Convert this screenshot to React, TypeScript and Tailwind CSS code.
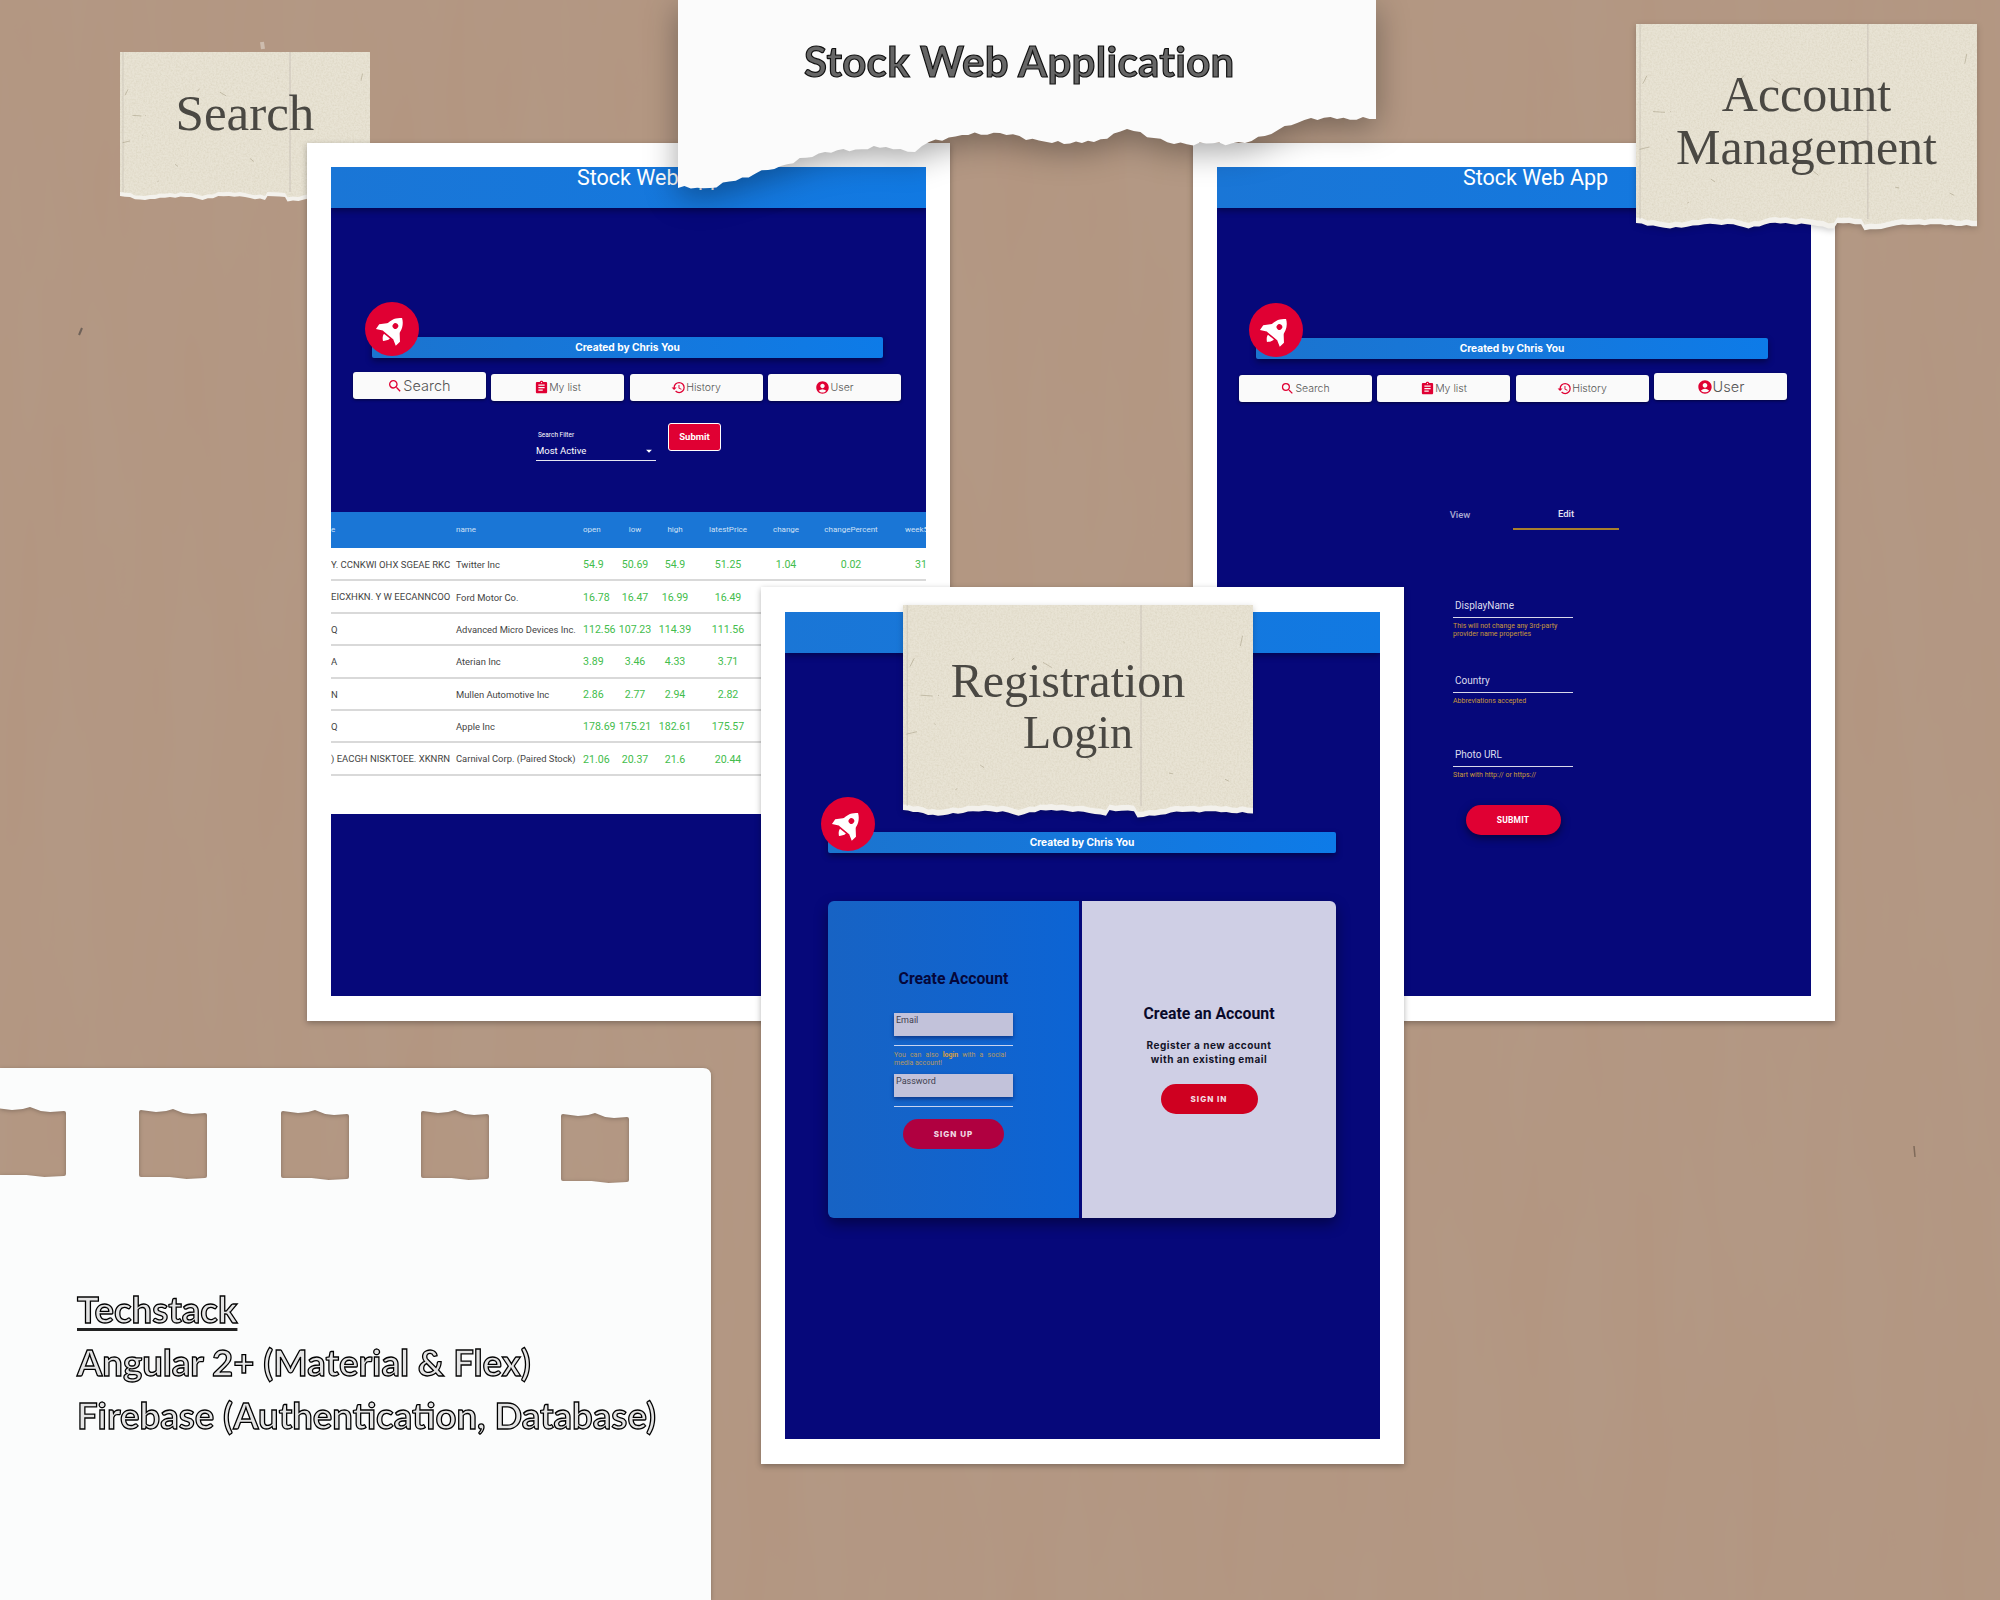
import type { ReactNode } from 'react';
import { MdAccountCircle, MdArrowDropDown, MdAssignment, MdHistory, MdSearch } from 'react-icons/md';

type Point = [number, number];

const tearProfile: Point[] = [
  [0, 0], [0.1, 5.6], [0.2, 1.3], [0.285, 1.3], [0.33, 5.6], [0.393, 0], [0.5, 1.3], [0.58, 5.6],
  [0.59, 0], [0.66, 1.3], [0.67, 7.3], [0.736, 4.6], [0.765, 2.3], [0.863, 1.3], [1, 3.3],
];

const specks: [number, number, number, number][] = [
  [0.97, 0.15, -0.006, 0.05], [0.31, 0.27, 0.008, -0.012], [0.63, 0.18, 0.003, 0.004], [0.4, 0.28, 0.025, 0.025],
  [0.02, 0.3, 0.012, -0.04], [0.05, 0.44, 0.035, 0.004], [0.1, 0.44, 0.003, 0.002], [0.09, 0.58, 0.003, 0.003],
  [0.01, 0.63, 0.03, -0.012], [0.22, 0.78, 0.012, 0.014], [0.15, 0.9, 0.005, -0.004], [0.92, 0.85, 0.012, 0.01],
  [0.52, 0.74, 0.015, 0.02], [0.76, 0.82, 0.012, 0.004],
];

// breaks a straight edge up so it looks ripped rather than drawn
function roughen(points: Point[], step = 7, amount = 1) {
  const out: Point[] = [];
  let n = 0;
  points.forEach((p, i) => {
    const next = points[i + 1];
    out.push(p);
    if (!next) return;
    const count = Math.floor(Math.abs(next[0] - p[0]) / step);
    for (let k = 1; k < count; k++) {
      n++;
      const t = k / count;
      const wobble = (Math.sin(n * 2.3) * 0.8 + Math.sin(n * 5.1) * 0.5) * amount;
      out.push([p[0] + (next[0] - p[0]) * t, p[1] + (next[1] - p[1]) * t + wobble]);
    }
  });
  return out.map(([x, y]) => `L${x.toFixed(1)} ${y.toFixed(1)}`).join(' ');
}

function TornPaper({ className, width, base, children }: { className: string; width: number; base: number; children?: ReactNode }) {
  const scale = width / 341;
  const edge = tearProfile.map(([t, dy]) => [width * t, base + dy * scale] as Point).reverse();
  const inner = tearProfile.map(([t, dy]) => [width * t, base + (dy - 5.5) * scale] as Point).reverse();
  const height = base + 12;
  return (
    <div className={`absolute ${className}`}>
      <svg width={width} height={height} viewBox={`0 0 ${width} ${height}`} className="absolute left-0 top-0 block">
        <path d={`M0 0 H${width} ${roughen(edge, 5, 0.7)} Z`} fill="#f3f1ec" />
        <path d={`M0 0 H${width} ${roughen(inner, 5, 0.9)} Z`} fill="#e8e3d4" filter="url(#paperGrain)" />
        <line x1={width * 0.012} y1="0" x2={width * 0.012} y2={base - 4} stroke="#b9b2a8" strokeWidth="1" opacity="0.5" />
        <line x1={width * 0.68} y1="0" x2={width * 0.68} y2={base - 4} stroke="#b9b0aa" strokeWidth="1" opacity="0.6" />
        {specks.map(([x, y, dx, dy], i) => (
          <line key={i} x1={x * width} y1={y * base} x2={(x + dx) * width} y2={(y + dy) * base} stroke="#8d8468" strokeWidth="1" opacity="0.4" />
        ))}
      </svg>
      <div className="relative flex flex-col items-center font-['Liberation_Serif',serif] text-[#4a4843]">{children}</div>
    </div>
  );
}

function TitlePaper() {
  const edge: Point[] = [
    [698, 119], [633, 118], [600, 130], [567, 143], [496, 144], [449, 129], [416, 142], [374, 143],
    [322, 133], [284, 135], [251, 142], [237, 152], [208, 147], [147, 152], [90, 170], [32, 188], [0, 188],
  ];
  return (
    <div className="absolute left-[678px] top-0 h-[196px] w-[698px] drop-shadow-[0_8px_16px_rgba(0,0,0,0.35)]">
      <svg width="698" height="196" viewBox="0 0 698 196" className="absolute left-0 top-0 block">
        <path d={`M0 0 H698 ${roughen(edge, 6, 1.6)} Z`} fill="#fbfbfb" />
      </svg>
      <h1 className="relative pt-[36px] pl-[126px] font-['Lato',sans-serif] text-[42px] leading-[50px] font-bold tracking-[0.3px] whitespace-nowrap text-[#666] [-webkit-text-stroke:1.2px_#111]">
        Stock Web Application
      </h1>
    </div>
  );
}

function Notebook() {
  const holes = [
    [-6, 66, 40], [139, 207, 42], [281, 349, 43], [421, 489, 43], [561, 629, 46],
  ];
  const holePath = holes.map(([a, b, y]) => {
    const w = b - a;
    return `M${a + 2} ${y} L${a + w * 0.25} ${y + 2} L${a + w * 0.4} ${y + 1} L${a + w * 0.5} ${y - 1} L${a + w * 0.65} ${y + 3} L${a + w * 0.78} ${y + 4} L${b - 2} ${y + 3} Q${b} ${y + 3} ${b} ${y + 5} L${b} ${y + 66} Q${b} ${y + 68} ${b - 2} ${y + 68} L${a + w * 0.7} ${y + 69} L${a + w * 0.45} ${y + 67} L${a + 2} ${y + 67} Q${a} ${y + 67} ${a} ${y + 65} L${a} ${y + 2} Q${a} ${y} ${a + 2} ${y} Z`;
  }).join(' ');
  return (
    <div className="absolute left-0 top-[1068px] h-[532px] w-[712px] drop-shadow-[0_1px_2px_rgba(0,0,0,0.25)]">
      <svg width="712" height="532" viewBox="0 0 712 532" className="absolute left-0 top-0 block">
        <path fillRule="evenodd" d={`M-2 0 H703 Q711 0 711 8 V532 H-2 Z ${holePath}`} fill="#fbfcfc" />
      </svg>
      <div className="relative pl-[77px] pt-[215px] font-['Lato',sans-serif] text-[36.5px] font-bold text-[#e4e4e4] [-webkit-text-stroke:1.3px_#000]">
        <p className="leading-[53px] underline decoration-[3px] underline-offset-[5px] decoration-[#222]">Techstack</p>
        <p className="leading-[53px]">Angular 2+ (Material &amp; Flex)</p>
        <p className="leading-[53px]">Firebase (Authentication, Database)</p>
      </div>
    </div>
  );
}

function RocketIcon() {
  return (
    <svg viewBox="0 0 24 24" fill="white" className="h-[31px] w-[31px] rotate-[40deg]">
      <path fillRule="evenodd" d="M12 .5C16.500 3.500 18 8 18 12l-1 5.500H7L6 12C6 8 7.500 3.500 12 .5ZM12 6.300a2.200 2.200 0 1 0 0 4.400 2.200 2.200 0 1 0 0-4.400Z" />
      <path d="M6.500 10 1.500 15.500 2 20l5.500-3ZM17.500 10l5 5.500-.5 4.500-5.500-3Z" />
      <path d="M9 18.700h6c0 2-1.800 3.800-3 4.800-1.200-1-3-2.800-3-4.800Z" />
    </svg>
  );
}

function AppHeader() {
  return (
    <div className="relative h-[41px] shrink-0 bg-gradient-to-r from-[#1a76d6] to-[#1179e2] pl-[246px] text-[21.5px] leading-[22px] text-white shadow-[0_3px_6px_rgba(0,0,0,0.35)]">
      Stock Web App
    </div>
  );
}

function CreatedBar({ className }: { className: string }) {
  return (
    <div className={`relative flex h-[21px] items-center justify-center rounded-[2px] bg-gradient-to-r from-[#1b74cf] to-[#0d7be8] font-['Inter',sans-serif] text-[10.2px] font-bold text-white shadow-[0_3px_6px_rgba(0,0,0,0.4)] ${className}`}>
      Created by Chris You
      <div className="absolute left-[-7px] top-[-35px] flex h-[54px] w-[54px] items-center justify-center rounded-full bg-[#e00033]">
        <RocketIcon />
      </div>
    </div>
  );
}

const navItems = [
  { label: 'Search', icon: MdSearch },
  { label: 'My list', icon: MdAssignment },
  { label: 'History', icon: MdHistory },
  { label: 'User', icon: MdAccountCircle },
];

function NavButtons({ active }: { active: string }) {
  return (
    <div className="flex items-start gap-[5.5px] pl-[21.5px] pt-[14px]">
      {navItems.map((item) => {
        const Icon = item.icon;
        const on = item.label === active;
        return (
          <button
            key={item.label}
            className={`flex h-[27px] w-[133px] items-center justify-center rounded-[3px] bg-[#fafafa] font-['Inter',sans-serif] font-light text-[#555] shadow-[0_1px_3px_rgba(0,0,0,0.5)] ${on ? 'text-[14.5px]' : 'mt-[2px] text-[10.5px]'}`}
          >
            <Icon className={`text-[#e00033] ${on ? 'h-[16px] w-[16px]' : 'h-[15px] w-[15px]'}`} />
            {item.label}
          </button>
        );
      })}
    </div>
  );
}

function Shell({ className, children }: { className: string; children: ReactNode }) {
  return (
    <div className={`absolute bg-white px-[24px] pb-[25px] shadow-[0_2px_6px_rgba(0,0,0,0.3)] ${className}`}>
      <div className="flex h-full flex-col overflow-hidden bg-[#06087a] font-['Roboto',sans-serif]">{children}</div>
    </div>
  );
}

const stocks = [
  { symbol: 'Y. CCNKWI OHX SGEAE RKC', name: 'Twitter Inc', open: '54.9', low: '50.69', high: '54.9', latest: '51.25', change: '1.04', percent: '0.02', week: '31' },
  { symbol: 'EICXHKN. Y W EECANNCOO', name: 'Ford Motor Co.', open: '16.78', low: '16.47', high: '16.99', latest: '16.49' },
  { symbol: 'Q', name: 'Advanced Micro Devices Inc.', open: '112.56', low: '107.23', high: '114.39', latest: '111.56' },
  { symbol: 'A', name: 'Aterian Inc', open: '3.89', low: '3.46', high: '4.33', latest: '3.71' },
  { symbol: 'N', name: 'Mullen Automotive Inc', open: '2.86', low: '2.77', high: '2.94', latest: '2.82' },
  { symbol: 'Q', name: 'Apple Inc', open: '178.69', low: '175.21', high: '182.61', latest: '175.57' },
  { symbol: ') EACGH NISKTOEE. XKNRN', name: 'Carnival Corp. (Paired Stock)', open: '21.06', low: '20.37', high: '21.6', latest: '20.44' },
];

function StockTable() {
  return (
    <div className="h-[302px] shrink-0 overflow-hidden bg-white">
      <table className="w-[640px] table-fixed border-collapse text-[10.6px] whitespace-nowrap">
        <colgroup>
          <col className="w-[125px]" />
          <col className="w-[121px]" />
          <col className="w-[38px]" />
          <col className="w-[40px]" />
          <col className="w-[40px]" />
          <col className="w-[66px]" />
          <col className="w-[50px]" />
          <col className="w-[80px]" />
          <col className="w-[80px]" />
        </colgroup>
        <thead>
          <tr className="h-[36px] bg-[#1a76d6] text-[8px] text-[#cfe0f5]">
            <th className="text-left font-normal">e</th>
            <th className="text-left font-normal">name</th>
            <th className="pl-[6px] text-left font-normal">open</th>
            <th className="font-normal">low</th>
            <th className="font-normal">high</th>
            <th className="font-normal">latestPrice</th>
            <th className="font-normal">change</th>
            <th className="font-normal">changePercent</th>
            <th className="pl-[14px] text-left font-normal">week5</th>
          </tr>
        </thead>
        <tbody>
          {stocks.map((row) => (
            <tr key={row.name} className="h-[32.4px] border-b-2 border-[#d9d9d9] text-[#43bd4c]">
              <td className="pt-[2px] text-[9.5px] text-[#444]">{row.symbol}</td>
              <td className="pt-[2px] text-[9.4px] text-[#444]">{row.name}</td>
              <td className="pl-[6px] pt-[2px]">{row.open}</td>
              <td className="pt-[2px] text-center">{row.low}</td>
              <td className="pt-[2px] text-center">{row.high}</td>
              <td className="pt-[2px] text-center">{row.latest}</td>
              <td className="pt-[2px] text-center">{row.change}</td>
              <td className="pt-[2px] text-center">{row.percent}</td>
              <td className="pl-[24px] pt-[2px]">{row.week}</td>
            </tr>
          ))}
        </tbody>
      </table>
    </div>
  );
}

function SearchWindow() {
  return (
    <Shell className="left-[307px] top-[143px] h-[878px] w-[643px] pt-[24px]">
      <AppHeader />
      <div className="h-[304px] shrink-0 pt-[129px]">
        <CreatedBar className="ml-[41px] w-[511px]" />
        <NavButtons active="Search" />
        <div className="flex items-start justify-center gap-[12px] pt-[22px]">
          <div className="w-[120px] pt-[7px] text-white">
            <div className="pl-[2px] text-[6.5px] leading-[10px]">Search Filter</div>
            <div className="flex h-[21px] items-center justify-between border-b border-white/90 pt-[2px] text-[9.5px]">
              Most Active
              <MdArrowDropDown className="h-[14px] w-[14px]" />
            </div>
          </div>
          <button className="h-[28px] w-[53px] rounded-[3px] border border-white bg-[#e00033] text-[9.5px] font-bold text-white">Submit</button>
        </div>
      </div>
      <StockTable />
      <div className="flex-1 bg-[#06087a]" />
    </Shell>
  );
}

const accountFields = [
  { label: 'DisplayName', hint: 'This will not change any 3rd-party provider name properties' },
  { label: 'Country', hint: 'Abbreviations accepted' },
  { label: 'Photo URL', hint: 'Start with http:// or https://' },
];

function AccountWindow() {
  return (
    <Shell className="left-[1193px] top-[143px] h-[878px] w-[642px] pt-[24px]">
      <AppHeader />
      <div className="pt-[130px]">
        <CreatedBar className="ml-[39px] w-[512px]" />
        <NavButtons active="User" />
      </div>
      <div className="mt-[97px] flex justify-center pr-[2px] text-[9.5px] font-medium">
        <div className="flex h-[31px] w-[106px] items-center justify-center pt-[1px] text-[#a9a9d0]">View</div>
        <div className="flex h-[31px] w-[106px] items-center justify-center border-b-2 border-[#a87f2d] pt-[1px] text-[#e4e4f2]">Edit</div>
      </div>
      <div className="ml-[236px] mt-[69px] w-[120px]">
        <div>
          {accountFields.map((field) => (
            <div key={field.label} className="h-[74.5px] last:h-[57px]">
              <div className="h-[19px] border-b border-[#d8d8ea] pl-[2px] text-[10px] leading-[14px] text-[#dcdcee]">{field.label}</div>
              <p className="mt-[4px] text-[7px] leading-[8px] text-[#c8993a]">{field.hint}</p>
            </div>
          ))}
        </div>
        <button className="mx-auto block h-[30px] w-[95px] rounded-full bg-[#e00033] text-[8.5px] font-bold tracking-wide text-white shadow-[0_3px_8px_rgba(0,0,0,0.5)]">SUBMIT</button>
      </div>
    </Shell>
  );
}

function FormField({ label }: { label: string }) {
  return (
    <div className="w-[119px]">
      <div className="h-[23px] bg-[#c2c2da] pl-[2px] text-[9px] leading-[14px] text-[#3f3f4f] shadow-[0_2px_4px_rgba(0,0,60,0.45)]">{label}</div>
      <div className="mt-[9px] h-px bg-[#c8d4f0]" />
    </div>
  );
}

function RegistrationWindow() {
  return (
    <Shell className="left-[761px] top-[587px] h-[877px] w-[643px] pt-[25px]">
      <AppHeader />
      <div className="pt-[179px]">
        <CreatedBar className="ml-[43px] w-[508px]" />
      </div>
      <div className="ml-[43px] mt-[48px] flex h-[317px] w-[508px] shrink-0 gap-[3px] overflow-hidden rounded-[6px] shadow-[0_6px_14px_rgba(0,0,0,0.4)]">
        <div className="flex w-[251px] flex-col items-center bg-gradient-to-r from-[#1763c4] to-[#0c64d4] pt-[68px]">
          <h2 className="text-[15.8px] leading-[20px] font-bold text-[#05073a]">Create Account</h2>
          <div className="mt-[24px]">
            <FormField label="Email" />
            <p className="mt-[5px] w-[112px] text-justify text-[7px] leading-[8px] text-[#b59a63]">
              You can also <b className="text-[#d8a040]">login</b> with a social media account!
            </p>
            <div className="mt-[7px]">
              <FormField label="Password" />
            </div>
          </div>
          <button className="mt-[12px] h-[30px] w-[101px] rounded-full bg-[#b00040] font-['Inter',sans-serif] text-[8px] font-extrabold tracking-[1px] text-[#f0d8e2]">SIGN UP</button>
        </div>
        <div className="flex flex-1 flex-col items-center bg-[#cfcfe5] pt-[103px]">
          <h2 className="text-[15.8px] leading-[20px] font-bold text-[#0a0a2a]">Create an Account</h2>
          <p className="mt-[14px] text-center font-['Inter',sans-serif] text-[10px] leading-[14px] font-bold tracking-[0.5px] text-[#141428]">
            Register a new account
            <br />
            with an existing email
          </p>
          <button className="mt-[18px] h-[30px] w-[97px] rounded-full bg-[#cf0020] font-['Inter',sans-serif] text-[8px] font-extrabold tracking-[1px] text-[#f4dce0]">SIGN IN</button>
        </div>
      </div>
    </Shell>
  );
}

export default function App() {
  return (
    <div className="relative h-[1600px] w-[2000px] overflow-hidden bg-[#b39884]">
      <svg width="2000" height="1600" className="absolute left-0 top-0 block">
        <defs>
          <filter id="kraft" x="0" y="0" width="100%" height="100%">
            <feTurbulence type="fractalNoise" baseFrequency="0.018 0.003" numOctaves="3" seed="7" />
            <feColorMatrix values="0 0 0 0 0.45 0 0 0 0 0.29 0 0 0 0 0.2 0.7 0 0 0 -0.2" />
          </filter>
          <filter id="paperGrain" x="0" y="0" width="100%" height="100%">
            <feTurbulence type="fractalNoise" baseFrequency="0.55" numOctaves="3" seed="3" result="noise" />
            <feColorMatrix in="noise" values="0 0 0 0 0.6 0 0 0 0 0.55 0 0 0 0 0.4 0.7 0 0 0 -0.25" result="tint" />
            <feComposite in="tint" in2="SourceGraphic" operator="in" result="grain" />
            <feMerge>
              <feMergeNode in="SourceGraphic" />
              <feMergeNode in="grain" />
            </feMerge>
          </filter>
        </defs>
        <rect width="2000" height="1600" filter="url(#kraft)" />
        <line x1="82" y1="328" x2="79" y2="335" stroke="#6f6259" strokeWidth="2" />
        <line x1="262" y1="42" x2="263" y2="49" stroke="#cdbcae" strokeWidth="4" />
        <line x1="1914" y1="1146" x2="1915" y2="1157" stroke="#7f6a5a" strokeWidth="1.5" />
      </svg>

      <Notebook />

      <TornPaper className="left-[120px] top-[52px] w-[250px]" width={250} base={144}>
        <div className="pt-[31px] text-[51px] leading-[60px]">Search</div>
      </TornPaper>

      <SearchWindow />
      <AccountWindow />
      <TitlePaper />
      <RegistrationWindow />

      <TornPaper className="left-[1636px] top-[24px] w-[341px] drop-shadow-[0_2px_3px_rgba(0,0,0,0.2)]" width={341} base={199}>
        <div className="pt-[44px] text-[50px] leading-[53px]">Account</div>
        <div className="text-[50px] leading-[53px]">Management</div>
      </TornPaper>

      <TornPaper className="left-[903px] top-[605px] w-[350px] drop-shadow-[0_2px_3px_rgba(0,0,0,0.2)]" width={350} base={205}>
        <div className="pt-[50px] pr-[20px] text-[48px] leading-[52px]">Registration</div>
        <div className="text-[46px] leading-[52px]">Login</div>
      </TornPaper>
    </div>
  );
}
